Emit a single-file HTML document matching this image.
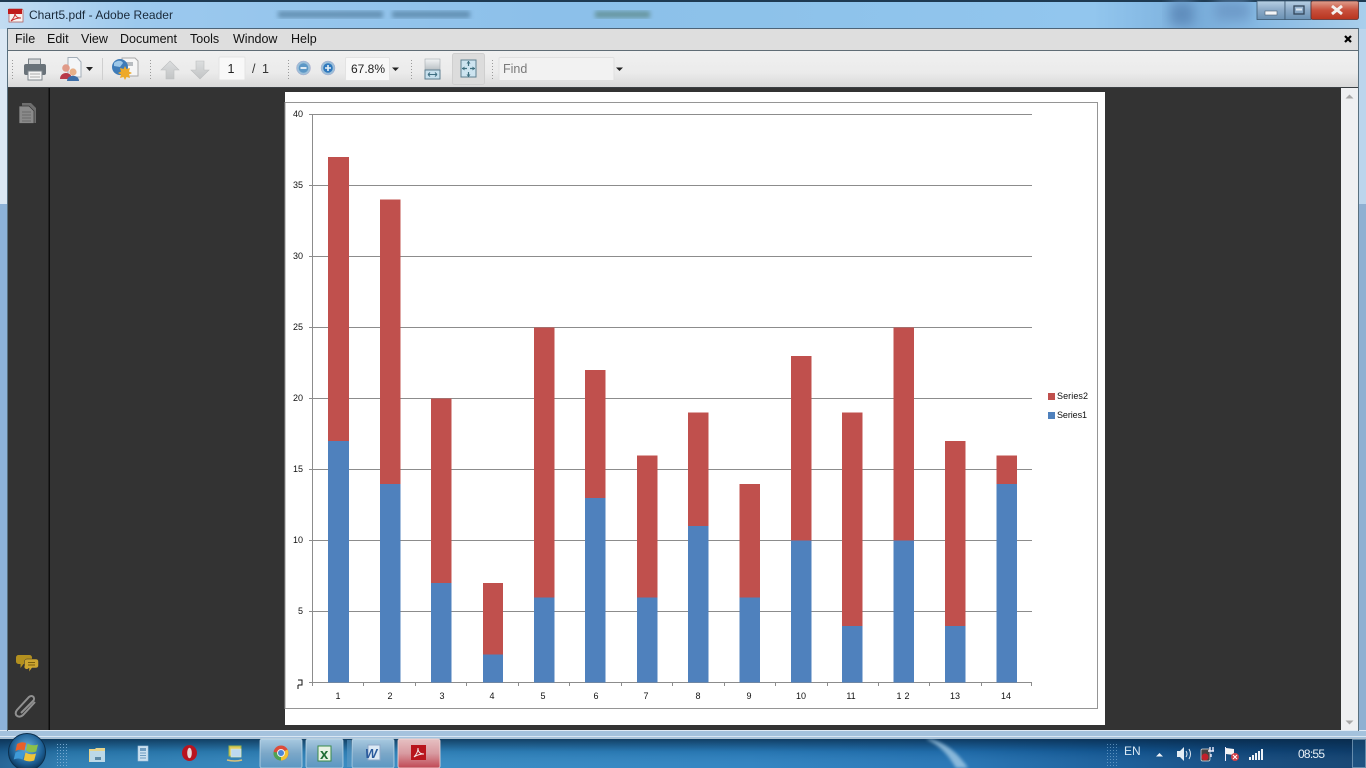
<!DOCTYPE html>
<html><head><meta charset="utf-8"><title>Chart5.pdf - Adobe Reader</title>
<style>
html,body{margin:0;padding:0;width:1366px;height:768px;overflow:hidden;background:#000}
svg{display:block}
text{font-family:"Liberation Sans",sans-serif}
</style></head><body>
<svg width="1366" height="768" viewBox="0 0 1366 768" xmlns="http://www.w3.org/2000/svg">
<defs>
<linearGradient id="title" x1="0" x2="1" y1="0" y2="0">
<stop offset="0" stop-color="#c2dcf2"/><stop offset=".1" stop-color="#9cc9ee"/><stop offset=".4" stop-color="#8cc0ea"/><stop offset=".55" stop-color="#8dc2ea"/><stop offset=".8" stop-color="#92c6ee"/><stop offset=".88" stop-color="#7aaedb"/><stop offset=".92" stop-color="#86b9e3"/><stop offset="1" stop-color="#a9cfec"/>
</linearGradient>
<linearGradient id="tb" x1="0" x2="0" y1="0" y2="1"><stop offset="0" stop-color="#f0f0f0"/><stop offset=".6" stop-color="#ebebeb"/><stop offset="1" stop-color="#d9d9d9"/></linearGradient>
<linearGradient id="task" x1="0" x2="1" y1="0" y2="0">
<stop offset="0" stop-color="#1d5f93"/><stop offset=".05" stop-color="#2a7cb2"/><stop offset=".3" stop-color="#3389c2"/><stop offset=".55" stop-color="#2b80c0"/><stop offset=".7" stop-color="#2273b5"/><stop offset=".82" stop-color="#145a98"/><stop offset=".9" stop-color="#114a80"/><stop offset="1" stop-color="#0f3f6e"/>
</linearGradient>
<linearGradient id="taskshade" x1="0" x2="0" y1="0" y2="1"><stop offset="0" stop-color="#06233f" stop-opacity=".75"/><stop offset=".45" stop-color="#06233f" stop-opacity=".12"/><stop offset="1" stop-color="#fff" stop-opacity=".04"/></linearGradient>
<linearGradient id="btnT" x1="0" x2="0" y1="0" y2="1"><stop offset="0" stop-color="#a8c9e0"/><stop offset=".5" stop-color="#7ba7c8"/><stop offset="1" stop-color="#5a97c2"/></linearGradient>
<linearGradient id="btnR" x1="0" x2="0" y1="0" y2="1"><stop offset="0" stop-color="#e6c0c2"/><stop offset=".5" stop-color="#d89aa0"/><stop offset="1" stop-color="#c04854"/></linearGradient>
<linearGradient id="wb" x1="0" x2="0" y1="0" y2="1"><stop offset="0" stop-color="#b8d0e4"/><stop offset=".5" stop-color="#8aa9c6"/><stop offset="1" stop-color="#6a91b4"/></linearGradient>
<linearGradient id="wc" x1="0" x2="0" y1="0" y2="1"><stop offset="0" stop-color="#dfa08e"/><stop offset=".5" stop-color="#c8503c"/><stop offset="1" stop-color="#b8341e"/></linearGradient>
<linearGradient id="fw" x1="0" x2="0" y1="0" y2="1"><stop offset="0" stop-color="#f2f4f5"/><stop offset="1" stop-color="#b9c0c4"/></linearGradient>
<linearGradient id="arr" x1="0" x2="0" y1="0" y2="1"><stop offset="0" stop-color="#dcdedf"/><stop offset="1" stop-color="#c2c4c5"/></linearGradient>
<radialGradient id="orb" cx=".5" cy=".4" r=".6"><stop offset="0" stop-color="#6ab2e0"/><stop offset=".7" stop-color="#1d5f95"/><stop offset="1" stop-color="#0d3557"/></radialGradient>
<filter id="bl"><feGaussianBlur stdDeviation="1.6"/></filter>
<filter id="bl2"><feGaussianBlur stdDeviation="2.4"/></filter>
<filter id="bl5"><feGaussianBlur stdDeviation="6"/></filter>
<pattern id="grip" width="3" height="3" patternUnits="userSpaceOnUse"><rect width="1" height="1" fill="#9a9a9a"/></pattern>
<pattern id="gripB" width="3" height="3" patternUnits="userSpaceOnUse"><rect width="1" height="1" fill="#7fb0d8"/></pattern>
</defs>

<!-- window chrome -->
<rect width="1366" height="738" fill="#8ec3ec"/>
<rect x="0" y="0" width="7" height="204" fill="#dbe8f4"/>
<rect x="0" y="204" width="7" height="530" fill="#8db2d8"/>
<rect x="1359" y="0" width="7" height="204" fill="#bcd5ec"/>
<rect x="1359" y="204" width="7" height="530" fill="#8fb0d2"/>
<rect x="0" y="0" width="1366" height="29" fill="url(#title)"/>
<rect x="0" y="0" width="1366" height="2" fill="#1e3a52"/>
<g filter="url(#bl5)"><rect x="1170" y="2" width="24" height="24" fill="#5f8cbc"/><rect x="1215" y="2" width="35" height="18" fill="#6d9ac8"/></g>
<g filter="url(#bl2)" fill="#45708f" opacity=".6"><rect x="278" y="11" width="105" height="7"/><rect x="392" y="11" width="78" height="7"/><rect x="595" y="11" width="55" height="7" fill="#4f7a70"/></g>
<rect x="0" y="730" width="1366" height="8" fill="#a4c2dd"/>
<rect x="0" y="730" width="1366" height="1" fill="#dfeaf5"/>
<rect x="0" y="736" width="1366" height="1" fill="#d9e6f2"/>
<rect x="7" y="28" width="1352" height="1" fill="#4d6478"/>
<rect x="7" y="28" width="1" height="703" fill="#59707f"/>
<rect x="1358" y="28" width="1" height="703" fill="#59707f"/>

<!-- title -->
<path d="M9 9h13l1 1v12h-14z" fill="#f7f2f0" stroke="#a55" stroke-width=".7"/>
<rect x="8" y="9" width="14" height="5" fill="#c01a1a"/>
<path d="M11 21c3-3 4-6 4-8 0 3 2 5 6 5-4 0-7 1-10 3z" fill="none" stroke="#c83030" stroke-width="1"/>
<text x="29" y="19" font-size="12" fill="#1a2a3a" textLength="144">Chart5.pdf - Adobe Reader</text>

<!-- caption buttons -->
<rect x="1257" y="1" width="28" height="18.500" fill="url(#wb)" stroke="#3c5870" stroke-width=".8"/>
<rect x="1285" y="1" width="26" height="18.500" fill="url(#wb)" stroke="#3c5870" stroke-width=".8"/>
<rect x="1311" y="1" width="47.500" height="18.500" rx="2" fill="url(#wc)" stroke="#5c3030" stroke-width=".8"/>
<rect x="1265" y="11" width="12" height="4" fill="#f4f6f8" stroke="#4b5f72" stroke-width=".6"/>
<rect x="1294" y="6" width="10" height="8" fill="none" stroke="#33465a" stroke-width="1.300"/><rect x="1296" y="8.500" width="6" height="2" fill="#dfe9f1"/>
<path d="M1331 6l10 8M1341 6l-10 8" stroke="#f3f0ee" stroke-width="3" transform="translate(1 0)"/>

<!-- menu bar -->
<rect x="8" y="29" width="1350" height="21" fill="#dedede"/>
<rect x="8" y="50" width="1350" height="1" fill="#5f6c75"/>
<g font-size="12.500" fill="#111">
<text x="15" y="43">File</text><text x="47" y="43">Edit</text><text x="81" y="43">View</text><text x="120" y="43">Document</text><text x="190" y="43">Tools</text><text x="233" y="43">Window</text><text x="291" y="43">Help</text>
</g>
<path d="M1345 36l6 6M1351 36l-6 6" stroke="#000" stroke-width="2.200"/>

<!-- toolbar -->
<rect x="8" y="51" width="1350" height="36" fill="url(#tb)"/>
<rect x="8" y="87" width="1350" height="1.500" fill="#3a3f43"/>
<rect x="12" y="58" width="3" height="22" fill="url(#grip)"/>
<rect x="149" y="58" width="3" height="22" fill="url(#grip)"/>
<rect x="286" y="58" width="3" height="22" fill="url(#grip)"/>
<rect x="410" y="58" width="3" height="22" fill="url(#grip)"/>
<rect x="491" y="58" width="3" height="22" fill="url(#grip)"/>
<rect x="102" y="58" width="1" height="22" fill="#cfcfcf"/>

<!-- print -->
<path d="M28.500 59h12v6h-12z" fill="#d8dadb" stroke="#7a8288"/>
<rect x="24" y="64" width="22" height="11" rx="2" fill="#697279"/>
<rect x="28" y="71" width="14" height="9" fill="#f5f5f5" stroke="#7f878d"/>
<path d="M30 74h10M30 77h10" stroke="#aaa"/>
<!-- share icon -->
<path d="M68 57.500h9l4 4.500v15h-13z" fill="#f4f6f8" stroke="#a4aeb8"/>
<circle cx="66" cy="68" r="3.800" fill="#e09a88"/><path d="M60 79c0-8 12-8 12 0z" fill="#b83a48"/>
<circle cx="73" cy="72" r="3.600" fill="#e8b088"/><path d="M67 81c0-7 12-7 12 0z" fill="#3e6fa8"/>
<path d="M86 67h7l-3.500 4z" fill="#222"/>
<!-- globe icon -->
<path d="M122 58h13l3 3v15h-16z" fill="#f6f6f6" stroke="#a8a8a8"/>
<path d="M123 62h10v4h-10z" fill="#b8bcc0"/>
<circle cx="120" cy="67" r="8" fill="#3f7cb8"/><path d="M114 63c3-3 8-3 9 0l-3 4-6-1z" fill="#9cc7e8"/>
<path d="M125 66l1.500 3 3.500-1-1 3.500 3 1.500-3 1.500 1 3.500-3.500-1-1.500 3-1.500-3-3.500 1 1-3.500-3-1.500 3-1.500-1-3.500 3.500 1z" fill="#eda929"/>
<!-- arrows -->
<path d="M170 61l9 9h-5v9h-8v-9h-5z" fill="url(#arr)" stroke="#bcbebf" stroke-width=".6"/>
<path d="M196 61h8v9h5l-9 9-9-9h5z" fill="url(#arr)" stroke="#bcbebf" stroke-width=".6"/>
<!-- page box -->
<rect x="219" y="57" width="26" height="23" rx="1" fill="#f8f8f8" stroke="#e3e3e3"/>
<text x="231" y="73" font-size="12.500" fill="#222" text-anchor="middle">1</text>
<text x="252" y="73" font-size="12.500" fill="#333">/</text>
<text x="262" y="73" font-size="12.500" fill="#333">1</text>
<!-- zoom -->
<circle cx="303.500" cy="68" r="7" fill="#9cbfd9" stroke="#aac" stroke-width=".5"/><circle cx="303.500" cy="68" r="4.800" fill="#5c97c6"/><rect x="300.500" y="67" width="6" height="2" fill="#dfeaf2"/>
<circle cx="328" cy="68" r="7" fill="#9cbfd9" stroke="#aac" stroke-width=".5"/><circle cx="328" cy="68" r="4.800" fill="#2f78bd"/><path d="M325 68h6M328 65v6" stroke="#e6f0f7" stroke-width="1.600"/>
<rect x="345.500" y="57.500" width="44" height="23" rx="1" fill="#f8f8f8" stroke="#e3e3e3"/>
<text x="351" y="73" font-size="12" fill="#222">67.8%</text>
<path d="M392 67.500h7l-3.500 3.500z" fill="#222"/>
<!-- fit width -->
<rect x="425" y="59" width="15" height="11" fill="url(#fw)" stroke="#a4abb0" stroke-width=".6"/>
<rect x="425" y="70" width="15" height="9" fill="#c7e0ee" stroke="#5f7f90"/>
<path d="M428 74.500h9M428 74.500l2-2M428 74.500l2 2M437 74.500l-2-2M437 74.500l-2 2" stroke="#3f6f82" stroke-width="1" fill="none"/>
<!-- fit page -->
<rect x="452.500" y="53.500" width="32" height="31" rx="2" fill="#dcdcdc" stroke="#cfcfcf"/>
<rect x="461" y="60" width="15" height="17" fill="#cde4f0" stroke="#5e7f90"/>
<path d="M468.500 61v5M468.500 72v5M462 68.500h5M470 68.500h5" stroke="#3f7080" stroke-width="1.200"/>
<path d="M466.500 63.500l2-2.500 2 2.500zM466.500 74.500l2 2.500 2-2.500zM464.500 66.500l-2.500 2 2.500 2zM472.500 66.500l2.500 2-2.500 2z" fill="#3f7080"/>
<!-- find -->
<rect x="499" y="57.500" width="115" height="23" rx="1" fill="#f2f2f2" stroke="#e0e0e0"/>
<text x="503" y="73" font-size="12.500" fill="#7a7a7a">Find</text>
<path d="M616 67.500h7l-3.500 3.500z" fill="#222"/>

<!-- content -->
<rect x="8" y="88" width="1333" height="642" fill="#333333"/>
<rect x="48.500" y="88" width="1.500" height="642" fill="#0d0d0d"/>
<!-- sidebar icons -->
<path d="M22 103h9l5 5v15h-14z" fill="#6e6e6e"/>
<path d="M19 106h10l5 5v12.500h-15z" fill="#8a8a8a" stroke="#333" stroke-width=".7"/>
<path d="M22 112h9M22 115h9M22 118h9M22 121h9" stroke="#6a6a6a"/>
<path d="M18.500 655h11a2.500 2.500 0 0 1 2.500 2.500v4a2.500 2.500 0 0 1-2.500 2.500h-6l-3 4v-4h-2a2.500 2.500 0 0 1-2.500-2.500v-4a2.500 2.500 0 0 1 2.500-2.500z" fill="#b3901f"/>
<path d="M27 659h9a2.500 2.500 0 0 1 2.500 2.500v4a2.500 2.500 0 0 1-2.500 2.500h-4l-3 4v-4a2.500 2.500 0 0 1-4.500-2.500v-4a2.500 2.500 0 0 1 2.500-2.500z" fill="#cda630" stroke="#333" stroke-width=".5"/>
<path d="M28 662.500h7M28 665h7" stroke="#7a5f10"/>
<path d="M22 713l12-12c3-3-1-7-4-4l-12 13c-4 5 2 9 6 5l12-13" fill="none" stroke="#909090" stroke-width="2" transform="translate(-1 0)"/>

<!-- scrollbar -->
<rect x="1341" y="88" width="17" height="642" fill="#eff0f2"/>
<path d="M1345.500 98.500l4-4 4 4z" fill="#a8a8a8"/>
<path d="M1345.500 720.500h8l-4 4z" fill="#a8a8a8"/>

<!-- page -->
<rect x="285" y="92" width="820" height="633" fill="#fff"/>
<rect x="285" y="102.500" width="812.500" height="606" fill="none" stroke="#959595" stroke-width="1"/>

<!-- chart gridlines -->
<g stroke="#8c8c8c" stroke-width="1">
<path d="M309 114.500H1032M309 185.500H1032M309 256.500H1032M309 327.500H1032M309 398.500H1032M309 469.500H1032M309 540.500H1032M309 611.500H1032M309 682.500H1032"/>
<path d="M312.500 114V686"/>
</g>

<!-- bars -->
<g>
<g fill="#4f81bd">
<rect x="328" y="441" width="21" height="241.500"/>
<rect x="380" y="484" width="20.500" height="198.500"/>
<rect x="431" y="583" width="20.500" height="99.500"/>
<rect x="483" y="654.500" width="20" height="28"/>
<rect x="534" y="597.500" width="20.500" height="85"/>
<rect x="585" y="498" width="20.500" height="184.500"/>
<rect x="637" y="597.500" width="20.500" height="85"/>
<rect x="688" y="526" width="20.500" height="156.500"/>
<rect x="739.500" y="597.500" width="20.500" height="85"/>
<rect x="791" y="540.500" width="20.500" height="142"/>
<rect x="842" y="626" width="20.500" height="56.500"/>
<rect x="893.500" y="540.500" width="20.500" height="142"/>
<rect x="945" y="626" width="20.500" height="56.500"/>
<rect x="996.500" y="484" width="20.500" height="198.500"/>
</g>
<g fill="#c0504d">
<rect x="328" y="157" width="21" height="284"/>
<rect x="380" y="199.500" width="20.500" height="284.500"/>
<rect x="431" y="398.500" width="20.500" height="184.500"/>
<rect x="483" y="583" width="20" height="71.500"/>
<rect x="534" y="327.500" width="20.500" height="270"/>
<rect x="585" y="370" width="20.500" height="128"/>
<rect x="637" y="455.500" width="20.500" height="142"/>
<rect x="688" y="412.500" width="20.500" height="113.500"/>
<rect x="739.500" y="484" width="20.500" height="113.500"/>
<rect x="791" y="356" width="20.500" height="184.500"/>
<rect x="842" y="412.500" width="20.500" height="213.500"/>
<rect x="893.500" y="327.500" width="20.500" height="213"/>
<rect x="945" y="441" width="20.500" height="185"/>
<rect x="996.500" y="455.500" width="20.500" height="28.500"/>
</g>
</g>

<!-- x ticks -->
<path d="M363.500 682v4M415.500 682v4M466.500 682v4M518.500 682v4M569.500 682v4M621.500 682v4M672.500 682v4M724.500 682v4M775.500 682v4M827.500 682v4M878.500 682v4M929.500 682v4M981.500 682v4M1031.500 682v4" stroke="#8c8c8c" stroke-width="1"/>

<!-- y labels -->
<g font-size="9" fill="#111" text-anchor="end">
<text x="303" y="117">40</text><text x="303" y="188">35</text><text x="303" y="259">30</text><text x="303" y="330">25</text><text x="303" y="401">20</text><text x="303" y="472">15</text><text x="303" y="543">10</text><text x="303" y="614">5</text>
</g>
<path d="M298 680h4v5h-4M298 685v4" fill="none" stroke="#111" stroke-width="1"/>
<!-- x labels -->
<g font-size="9" fill="#111" text-anchor="middle">
<text x="338" y="699">1</text><text x="390" y="699">2</text><text x="442" y="699">3</text><text x="492" y="699">4</text><text x="543" y="699">5</text><text x="596" y="699">6</text><text x="646" y="699">7</text><text x="698" y="699">8</text><text x="749" y="699">9</text><text x="801" y="699">10</text><text x="851" y="699">11</text><text x="903" y="699" textLength="13">12</text><text x="955" y="699">13</text><text x="1006" y="699">14</text>
</g>
<!-- legend -->
<rect x="1048" y="393" width="7" height="7" fill="#c0504d"/>
<rect x="1048" y="412" width="7" height="7" fill="#4f81bd"/>
<text x="1057" y="399" font-size="9" fill="#111" textLength="31">Series2</text>
<text x="1057" y="418" font-size="9" fill="#111" textLength="30">Series1</text>

<!-- taskbar -->
<rect x="0" y="738" width="1366" height="30" fill="url(#task)"/>
<rect x="0" y="738" width="1366" height="30" fill="url(#taskshade)"/>
<rect x="0" y="738" width="1366" height="1" fill="#d7e4ee" opacity=".8"/>
<path d="M930 739c16 4 28 14 38 29h-12c-7-12-15-22-30-29z" fill="#a9cfe8" opacity=".75" filter="url(#bl)"/>
<rect x="57" y="742" width="11" height="24" fill="url(#gripB)" opacity=".9"/>
<rect x="1107" y="742" width="11" height="24" fill="url(#gripB)" opacity=".65"/>
<rect x="347" y="740" width="4" height="27" fill="#5d9ac4" opacity=".6"/>
<!-- start orb -->
<circle cx="27" cy="752" r="18.500" fill="url(#orb)" stroke="#0c2f4d"/>
<path d="M17 744q5-3 9-1l-1.500 7.500q-5-2-9 .5z" fill="#e8602a"/>
<path d="M27.500 743.500q5 3 10.500 1l-1.800 7q-5.500 2-10.200-1z" fill="#8cc04a"/>
<path d="M15.500 752.500q4.500-2 9-.5l-1.800 7.500q-4.500-2-9 0z" fill="#3f9ad8"/>
<path d="M25.500 752.500q5 3 10.500 1l-1.800 7q-5.500 2-10.500-.5z" fill="#f0c43a"/>
<!-- quick launch -->
<path d="M89 749h6l1-1h9v14h-16z" fill="#e7d48c"/><path d="M90 751h15v11h-15z" fill="#bcd9e8"/><path d="M95 757h6v3h-6z" fill="#5d8aa6"/>
<rect x="138" y="746" width="10" height="15" fill="#cbe0f0" stroke="#a7c4dc" stroke-width=".6"/><rect x="140" y="748" width="6" height="3" fill="#6f9cc0"/><path d="M140 753h6M140 755.500h6M140 758h6" stroke="#6f9cc0"/>
<ellipse cx="189.500" cy="753" rx="7.500" ry="8" fill="#b81420"/><ellipse cx="189.500" cy="753" rx="2.300" ry="5.300" fill="#e8d8d8"/>
<rect x="229" y="746" width="12" height="10" fill="#e0c95a" stroke="#9cb44a" stroke-width="1"/><rect x="231" y="749" width="10" height="8" fill="#bcd8f0" stroke="#dfe8c0" stroke-width=".7"/><path d="M227 760q8 2 15 0" stroke="#d8c27a" stroke-width="1.500" fill="none"/>
<!-- task buttons -->
<rect x="260" y="739" width="42" height="29" rx="2" fill="url(#btnT)" stroke="#c8deec" stroke-opacity=".7"/>
<rect x="306" y="739" width="37" height="29" rx="2" fill="url(#btnT)" stroke="#c8deec" stroke-opacity=".7"/>
<rect x="352" y="739" width="42" height="29" rx="2" fill="url(#btnT)" stroke="#c8deec" stroke-opacity=".7"/>
<rect x="398" y="739" width="42" height="29" rx="2" fill="url(#btnR)" stroke="#f0d8d8" stroke-opacity=".8"/>
<!-- chrome -->
<circle cx="281" cy="753" r="7.500" fill="#dd4c3a"/>
<path d="M281 753L287.500 749.500A7.500 7.500 0 0 1 281 760.500L277 759z" fill="#f1c232"/>
<path d="M281 753L281 760.500A7.500 7.500 0 0 1 273.500 752z" fill="#4fa355"/>
<circle cx="281" cy="753" r="3.500" fill="#4a86d8" stroke="#eee" stroke-width="1"/>
<!-- excel -->
<rect x="318" y="746" width="13" height="15" fill="#e8f2e4" stroke="#3a8a4a"/>
<text x="320" y="759" font-size="15" font-weight="bold" font-family="Liberation Serif" fill="#1f6b34">x</text>
<!-- word -->
<rect x="368" y="745" width="12" height="15" fill="#dce8f4" stroke="#8ea8c8"/>
<text x="365" y="758" font-size="13" font-weight="bold" font-style="italic" fill="#2a5a9c">W</text>
<!-- adobe -->
<rect x="411" y="745" width="15" height="15" fill="#b8141c"/>
<path d="M414 757c3-3 4-6 4-9 0 4 2 6 6 6-4 0-7 1-10 3z" fill="none" stroke="#f4e8e8" stroke-width="1"/>

<!-- tray -->
<text x="1124" y="755" font-size="12" fill="#d8e8f4">EN</text>
<path d="M1156 756.500l3.500-3.500 3.500 3.500z" fill="#f0f4f8"/>
<path d="M1177 751h3l4-4v14l-4-4h-3z" fill="#e4edf4"/>
<path d="M1186 751q2 3 0 6M1189 749q3 5 0 10" stroke="#dfe8f0" stroke-width="1" fill="none"/>
<rect x="1201" y="749" width="9" height="12" rx="1.500" fill="#444" stroke="#ddd" stroke-width=".7"/>
<circle cx="1205" cy="757" r="3.500" fill="#c0202a"/>
<path d="M1208 751h6M1210 747v4M1213 747v4M1211 754v3" stroke="#eef" stroke-width="1.400" fill="none"/>
<path d="M1225.500 747v14" stroke="#eef" stroke-width="1"/><path d="M1226 748l8 1v6l-8-1z" fill="#f4f4f4"/>
<circle cx="1235" cy="757" r="4" fill="#d04048"/><path d="M1233 755l4 4M1237 755l-4 4" stroke="#fff"/>
<path d="M1249 757h2v3h-2zM1252 755h2v5h-2zM1255 753h2v7h-2zM1258 751h2v9h-2zM1261 749h2v11h-2z" fill="#eef3f8"/>
<text x="1298" y="758" font-size="12" fill="#e8f0f6" textLength="27">08:55</text>
<rect x="1352.500" y="739.500" width="13" height="28" fill="#2b6a9c" fill-opacity=".35" stroke="#88aac4" stroke-opacity=".7"/>
</svg>
</body></html>
